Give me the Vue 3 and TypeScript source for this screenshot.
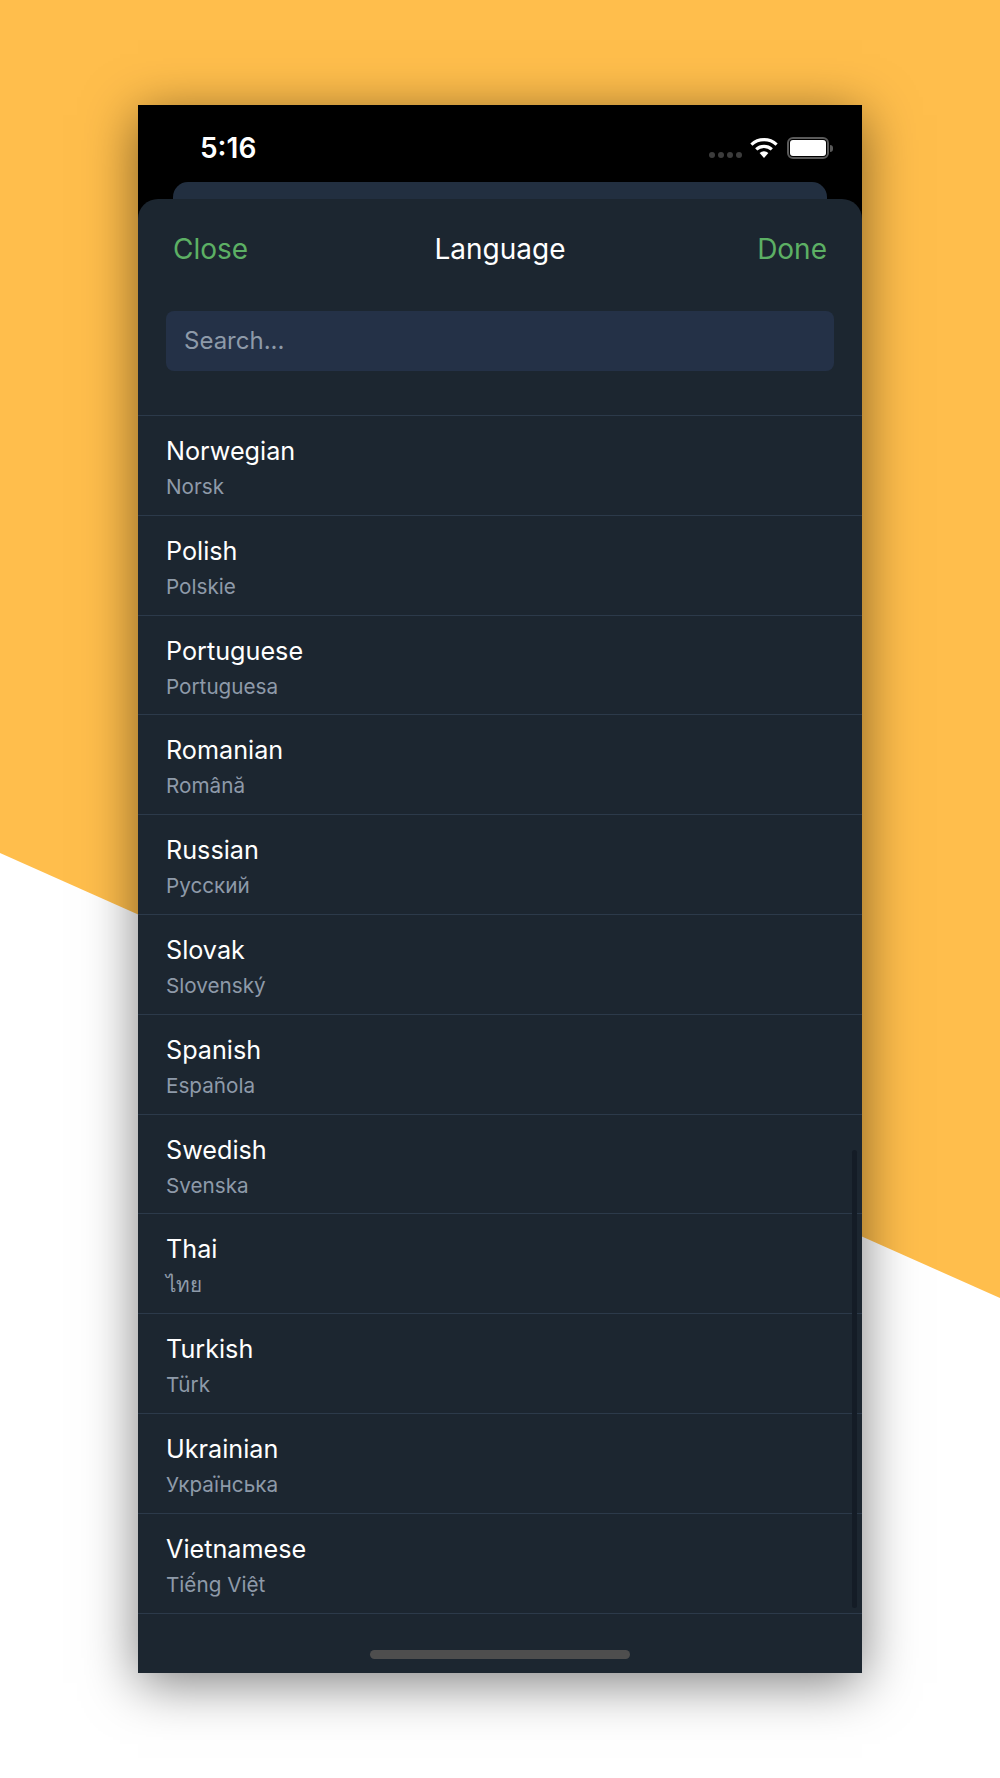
<script setup lang="ts">
const languages = [
  { name: 'Norwegian', native: 'Norsk' },
  { name: 'Polish', native: 'Polskie' },
  { name: 'Portuguese', native: 'Portuguesa' },
  { name: 'Romanian', native: 'Română' },
  { name: 'Russian', native: 'Русский' },
  { name: 'Slovak', native: 'Slovenský' },
  { name: 'Spanish', native: 'Española' },
  { name: 'Swedish', native: 'Svenska' },
  { name: 'Thai', native: 'ไทย' },
  { name: 'Turkish', native: 'Türk' },
  { name: 'Ukrainian', native: 'Українська' },
  { name: 'Vietnamese', native: 'Tiếng Việt' },
];
</script>

<template>
  <div class="page">
    <div class="phone">
      <div class="status-bar">
        <div class="status-row">
          <span class="time">5:16</span>
          <div class="status-icons">
            <div class="signal">
              <i></i><i></i><i></i><i></i>
            </div>
            <svg class="wifi" width="28" height="20" viewBox="0 0 28 20">
              <path d="M14 20 L9.6 15 A6.6 6.6 0 0 1 18.4 15 Z" fill="#fff" />
              <path d="M6.2 11.4 A11.6 11.6 0 0 1 21.8 11.4" fill="none" stroke="#fff" stroke-width="3.2" />
              <path d="M1.4 6.6 A18.6 18.6 0 0 1 26.6 6.6" fill="none" stroke="#fff" stroke-width="3.2" />
            </svg>
            <div class="battery">
              <div class="battery-body"><div class="battery-fill"></div></div>
              <div class="battery-nub"></div>
            </div>
          </div>
        </div>
        <div class="back-card"></div>
      </div>

      <div class="sheet">
        <div class="sheet-header">
          <span class="action">Close</span>
          <span class="title">Language</span>
          <span class="action action-right">Done</span>
        </div>
        <div class="search-wrap">
          <input class="search" type="text" placeholder="Search..." />
        </div>
        <ul class="list">
          <li v-for="lang in languages" :key="lang.name" class="row">
            <div class="row-name">{{ lang.name }}</div>
            <div class="row-native">{{ lang.native }}</div>
          </li>
        </ul>
        <div class="home-bar"></div>
        <div class="scrollbar"></div>
      </div>
    </div>
  </div>
</template>

<style>
html,
body {
  margin: 0;
  background: #fff;
}
</style>

<style scoped>
.page {
  position: relative;
  width: 1000px;
  height: 1778px;
  padding-top: 105px;
  box-sizing: border-box;
  background: #fff;
  overflow: hidden;
  font-family: Inter, "Noto Sans", "Liberation Sans", sans-serif;
}

.page::before {
  content: '';
  position: absolute;
  inset: 0;
  background: #ffbe4c;
  clip-path: polygon(0 0, 1000px 0, 1000px 1298px, 0 853px);
}

.phone {
  position: relative;
  width: 724px;
  height: 1568px;
  margin: 0 auto;
  display: flex;
  flex-direction: column;
  background: #000;
  box-shadow: 0 10px 50px rgba(0, 0, 0, 0.5);
}

.status-bar {
  height: 94px;
  display: flex;
  flex-direction: column;
  flex-shrink: 0;
}

.status-row {
  flex: 1;
  display: flex;
  justify-content: space-between;
  align-items: flex-start;
  padding: 26px 29px 0 62px;
}

.time {
  color: #fff;
  font-size: 28px;
  line-height: 34px;
  font-weight: 600;
}

.status-icons {
  display: flex;
  align-items: flex-start;
  padding-top: 6px;
}

.signal {
  display: flex;
  gap: 3px;
  margin: 15px 8px 0 0;
}

.signal i {
  width: 6px;
  height: 6px;
  border-radius: 50%;
  background: #3c3c3c;
}

.wifi {
  margin: 1px 9px 0 0;
}

.battery {
  display: flex;
  align-items: center;
}

.battery-body {
  width: 42px;
  height: 22px;
  box-sizing: border-box;
  border: 2px solid #5a5a5a;
  border-radius: 6px;
  padding: 1px;
}

.battery-fill {
  height: 100%;
  background: #fff;
  border-radius: 3px;
}

.battery-nub {
  width: 3px;
  height: 7px;
  margin-left: 1px;
  background: #5a5a5a;
  border-radius: 0 3px 3px 0;
}

.back-card {
  height: 17px;
  margin: 0 35px;
  background: #222f40;
  border-radius: 15px 15px 0 0;
}

.sheet {
  position: relative;
  flex: 1;
  display: flex;
  flex-direction: column;
  background: #1c2630;
  border-radius: 20px 20px 0 0;
}

.sheet-header {
  height: 100px;
  padding: 0 35px;
  display: grid;
  grid-template-columns: 1fr auto 1fr;
  align-items: center;
  flex-shrink: 0;
}

.action {
  color: #5cb064;
  font-size: 28px;
}

.action-right {
  text-align: right;
}

.title {
  color: #fff;
  font-size: 28px;
}

.search-wrap {
  padding: 12px 28px 44px;
}

.search {
  display: block;
  width: 100%;
  height: 60px;
  box-sizing: border-box;
  padding: 0 18px 2px;
  border: none;
  outline: none;
  border-radius: 8px;
  background: #243147;
  color: #fff;
  font-family: inherit;
  font-size: 24px;
}

.search::placeholder {
  color: #8e9aa9;
  opacity: 1;
}

.list {
  list-style: none;
  margin: 0;
  padding: 0;
  border-top: 1px solid #2c3a4a;
}

.row {
  height: 99.8px;
  box-sizing: border-box;
  padding: 18px 28px 0;
  border-bottom: 1px solid #2c3a4a;
}

.row-name {
  color: #fff;
  font-size: 25.2px;
  line-height: 34px;
}

.row-native {
  margin-top: 4px;
  color: #8e9aa9;
  font-size: 20.7px;
  line-height: 30px;
}

.home-bar {
  width: 260px;
  height: 9px;
  margin: auto auto 14px;
  border-radius: 5px;
  background: #4e4e4e;
}

.scrollbar {
  position: absolute;
  top: 951px;
  right: 5px;
  width: 5px;
  height: 458px;
  border-radius: 3px;
  background: #141c26;
}
</style>
